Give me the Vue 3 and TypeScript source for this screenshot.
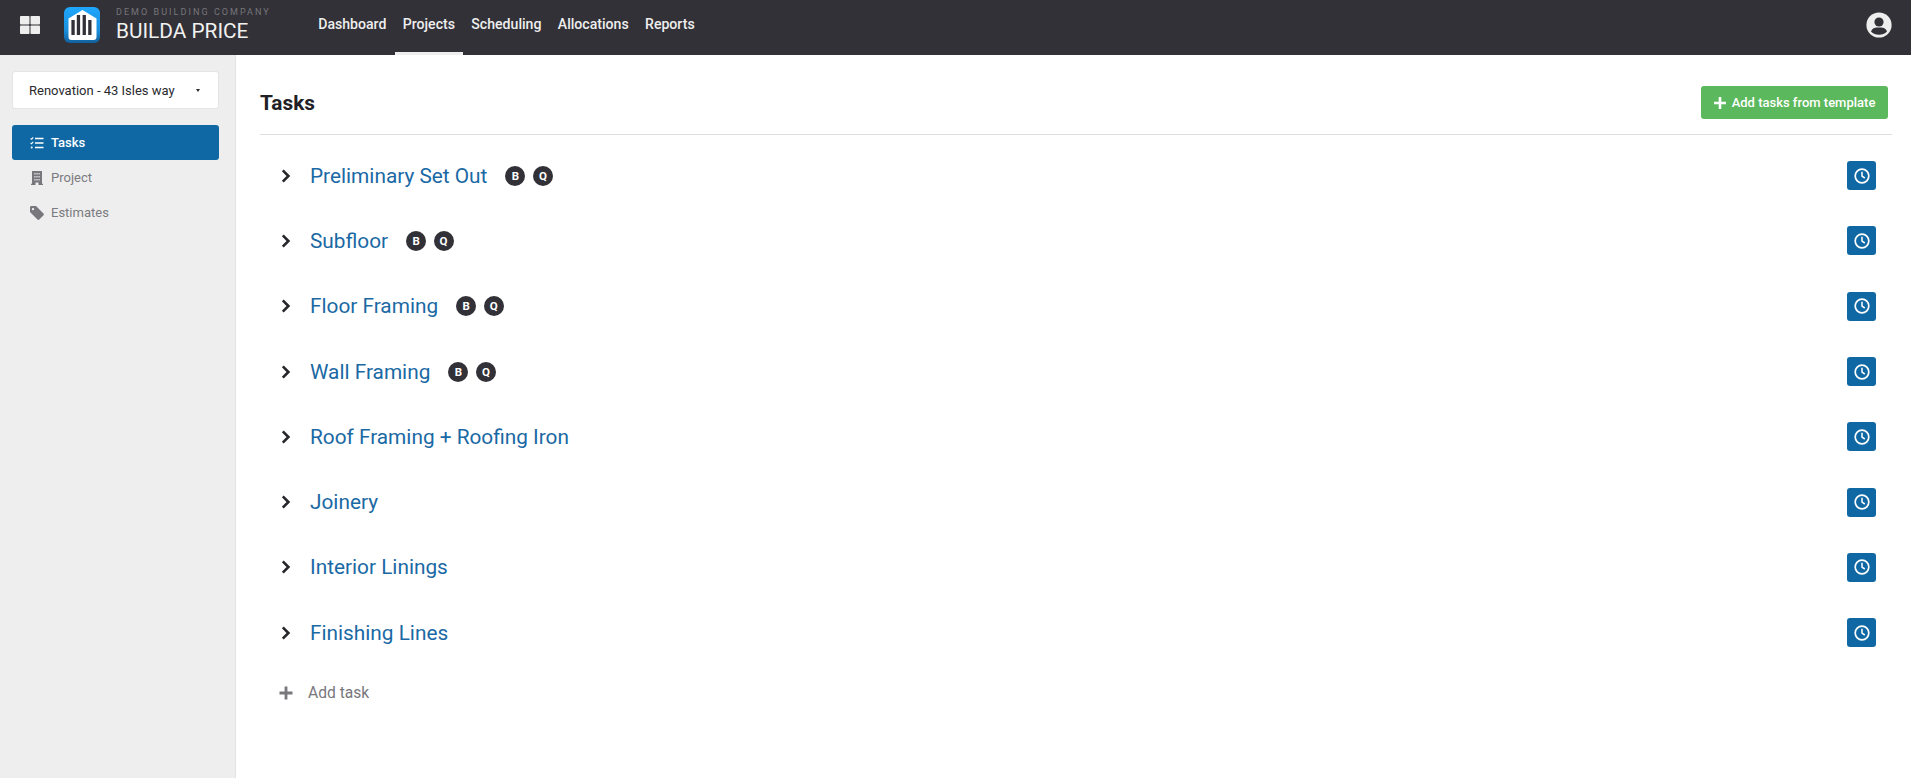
<script setup lang="ts">
interface Task { name: string; badges: boolean }
const tasks: Task[] = [
  { name: 'Preliminary Set Out', badges: true },
  { name: 'Subfloor', badges: true },
  { name: 'Floor Framing', badges: true },
  { name: 'Wall Framing', badges: true },
  { name: 'Roof Framing + Roofing Iron', badges: false },
  { name: 'Joinery', badges: false },
  { name: 'Interior Linings', badges: false },
  { name: 'Finishing Lines', badges: false },
]
const nav = ['Dashboard', 'Projects', 'Scheduling', 'Allocations', 'Reports']
</script>

<template>
  <div class="app">
    <header class="topbar">
      <svg class="grid-icon" width="20" height="18" viewBox="0 0 20 18">
        <rect x="0" y="0" width="9.5" height="8.5" rx="0.8" fill="#eeeeee" />
        <rect x="10.5" y="0" width="9.5" height="8.5" rx="0.8" fill="#eeeeee" />
        <rect x="0" y="9.5" width="9.5" height="8.5" rx="0.8" fill="#eeeeee" />
        <rect x="10.5" y="9.5" width="9.5" height="8.5" rx="0.8" fill="#eeeeee" />
      </svg>
      <svg class="logo" width="36" height="36" viewBox="0 0 36 36">
        <defs>
          <linearGradient id="lg" x1="0" y1="0" x2="0" y2="1">
            <stop offset="0" stop-color="#1ea7fd" />
            <stop offset="0.65" stop-color="#1a8fdc" />
            <stop offset="1" stop-color="#11609c" />
          </linearGradient>
        </defs>
        <rect width="36" height="36" rx="6" fill="url(#lg)" />
        <path d="M18.5 3 L32.5 11.5 V30 Q32.5 33 29.5 33 H7.5 Q4.5 33 4.5 30 V11.5 Z" fill="#ffffff" />
        <rect x="7.4" y="13" width="3.3" height="15" fill="#323137" />
        <rect x="12.8" y="8" width="3.3" height="20" fill="#323137" />
        <rect x="18.6" y="8" width="3.3" height="20" fill="#323137" />
        <rect x="24.2" y="13" width="3.3" height="15" fill="#323137" />
      </svg>
      <div class="brand">
        <div class="company">DEMO BUILDING COMPANY</div>
        <div class="product">BUILDA PRICE</div>
      </div>
      <nav class="nav">
        <a v-for="n in nav" :key="n" class="nav-item" :class="{ active: n === 'Projects' }">{{ n }}</a>
      </nav>
      <svg class="user" width="26" height="26" viewBox="0 0 26 26">
        <circle cx="13" cy="13" r="12.6" fill="#eeeeee" />
        <circle cx="13" cy="10" r="4.6" fill="#323137" />
        <path d="M5 19.5 C6.5 15.8 9.5 15.6 13 15.6 C16.5 15.6 19.5 15.8 21 19.5 C19 21.8 16 22.8 13 22.8 C10 22.8 7 21.8 5 19.5 Z" fill="#323137" />
      </svg>
    </header>

    <div class="body">
      <aside class="sidebar">
        <div class="select">
          <span>Renovation - 43 Isles way</span>
          <i class="caret"></i>
        </div>
        <div class="menu">
          <div class="menu-item active">
            <svg width="14" height="14" viewBox="0 0 14 14" fill="none" stroke="#fff">
              <path d="M5 2.5H13.5M5 7H13.5M5 11.5H13.5" stroke-width="1.5" />
              <path d="M0.6 2.3L1.6 3.3L3.2 1.3" stroke-width="1.1" />
              <path d="M0.6 6.8L1.6 7.8L3.2 5.8" stroke-width="1.1" />
              <circle cx="1.7" cy="11.5" r="1" fill="#fff" stroke="none" />
            </svg>
            <span>Tasks</span>
          </div>
          <div class="menu-item">
            <svg width="14" height="14" viewBox="0 0 14 14">
              <path d="M2 0H12V12.8H13V14H8.5V11.5H5.5V14H1V12.8H2Z" fill="#77777c" />
              <path d="M4.2 2H5.6V3.6H4.2ZM6.3 2H7.7V3.6H6.3ZM8.4 2H9.8V3.6H8.4ZM4.2 5H5.6V6.6H4.2ZM6.3 5H7.7V6.6H6.3ZM8.4 5H9.8V6.6H8.4ZM4.2 8H5.6V9.6H4.2ZM6.3 8H7.7V9.6H6.3ZM8.4 8H9.8V9.6H8.4Z" fill="#d8d8da" />
            </svg>
            <span>Project</span>
          </div>
          <div class="menu-item">
            <svg width="14" height="14" viewBox="0 0 14 14">
              <path fill-rule="evenodd" d="M0 1.4C0 .6.6 0 1.4 0H6L13.5 7.5C14 8 14 8.8 13.5 9.3L9.3 13.5C8.8 14 8 14 7.5 13.5L0 6ZM3 1.9A1.2 1.2 0 1 0 3 4.3A1.2 1.2 0 1 0 3 1.9Z" fill="#77777c" />
            </svg>
            <span>Estimates</span>
          </div>
        </div>
      </aside>

      <main class="content">
        <div class="title-row">
          <h1>Tasks</h1>
          <button class="add-btn">
            <svg width="12" height="12" viewBox="0 0 12 12"><path d="M6 0V12M0 6H12" stroke="#fff" stroke-width="2.6" /></svg>
            <span>Add tasks from template</span>
          </button>
        </div>

        <div class="rows">
          <div v-for="t in tasks" :key="t.name" class="row">
            <svg class="chev" width="10" height="14" viewBox="0 0 10 14" fill="none">
              <path d="M1.8 1.4L7.4 7L1.8 12.6" stroke="#26262b" stroke-width="2.6" />
            </svg>
            <a class="name">{{ t.name }}</a>
            <span v-if="t.badges" class="badges">
              <b class="badge">B</b>
              <b class="badge">Q</b>
            </span>
            <button class="clock">
              <svg width="16" height="16" viewBox="0 0 16 16" fill="none" stroke="#fff">
                <circle cx="8" cy="8" r="6.8" stroke-width="1.7" />
                <path d="M8 3.8V8.2L10.8 10" stroke-width="1.5" />
              </svg>
            </button>
          </div>
        </div>

        <div class="add-task">
          <svg width="14" height="14" viewBox="0 0 14 14"><path d="M7 .5V13.5M.5 7H13.5" stroke="#77777c" stroke-width="2.8" /></svg>
          <span>Add task</span>
        </div>
      </main>
    </div>
  </div>
</template>

<style>
html, body { margin: 0; background: #fff; }
</style>

<style scoped>
.app {
  height: 778px;
  display: flex;
  flex-direction: column;
  overflow: hidden;
  font-family: Roboto, "Liberation Sans", sans-serif;
}
.topbar {
  height: 55px;
  flex: none;
  background: #323137;
  display: flex;
  align-items: center;
  padding-left: 20px;
  padding-right: 19px;
}
.grid-icon { flex: none; margin-bottom: 5px; }
.logo { flex: none; margin-left: 24px; margin-bottom: 5px; }
.brand { margin-left: 16px; width: 194px; flex: none; margin-bottom: 6px; }
.company {
  font-size: 9px;
  line-height: 11px;
  letter-spacing: 2.05px;
  color: #76757a;
  white-space: nowrap;
}
.product {
  font-size: 20.8px;
  line-height: 24px;
  color: #f1f1f1;
  white-space: nowrap;
  margin-top: 1px;
}
.nav {
  display: flex;
  height: 55px;
}
.nav-item {
  padding: 0 8.2px;
  font-size: 14.1px;
  font-weight: 500;
  line-height: 48px;
  color: #eeeeee;
  height: 52px;
  border-bottom: 3px solid transparent;
  white-space: nowrap;
}
.nav-item.active { border-bottom-color: #eeeeee; }
.user { margin-left: auto; flex: none; margin-bottom: 6px; }

.body { flex: 1; display: flex; min-height: 0; }
.sidebar {
  width: 236px;
  flex: none;
  box-sizing: border-box;
  background: #eeeeee;
  border-right: 1px solid #e2e2e6;
  padding: 16px 16px 16px 12px;
}
.select {
  height: 36px;
  box-sizing: content-box;
  background: #fff;
  border: 1px solid #e3e3e8;
  border-radius: 3px;
  display: flex;
  align-items: center;
  justify-content: space-between;
  padding: 0 18px 0 16px;
  width: 171px;
  font-size: 13px;
  color: #2a2a2e;
}
.caret {
  width: 0;
  height: 0;
  border-left: 2.5px solid transparent;
  border-right: 2.5px solid transparent;
  border-top: 3px solid #2a2a2e;
}
.menu { margin-top: 16px; display: flex; flex-direction: column; }
.menu-item {
  height: 35px;
  display: flex;
  align-items: center;
  gap: 7px;
  padding-left: 18px;
  font-size: 13px;
  color: #7b7b80;
}
.menu-item.active {
  background: #0f68a3;
  color: #fff;
  font-weight: 500;
  border-radius: 3px;
}
.content { flex: 1; min-width: 0; padding: 0 19px 0 24px; }
.title-row {
  height: 80px;
  box-sizing: border-box;
  padding-top: 16px;
  border-bottom: 1px solid #dedee3;
  display: flex;
  align-items: center;
  justify-content: space-between;
}
h1 {
  margin: 0;
  font-size: 20.8px;
  font-weight: 700;
  color: #212125;
}
.add-btn {
  width: 187px;
  height: 33px;
  margin-right: 4px;
  border: none;
  border-radius: 3px;
  background: #5cb85c;
  color: #fff;
  font-family: inherit;
  font-size: 13px;
  font-weight: 500;
  display: flex;
  align-items: center;
  justify-content: center;
  gap: 6px;
  padding: 0;
}
.rows { padding-top: 8px; }
.row {
  height: 65.3px;
  display: flex;
  align-items: center;
  padding-left: 21px;
  padding-right: 16px;
}
.chev { flex: none; }
.name {
  margin-left: 19px;
  font-size: 20.8px;
  color: #1a69a4;
  white-space: nowrap;
}
.badges { display: inline-flex; gap: 7.5px; margin-left: 18px; }
.badge {
  width: 20px;
  height: 20px;
  border-radius: 50%;
  background: #323137;
  color: #fff;
  font-size: 11.5px;
  font-weight: 700;
  display: flex;
  align-items: center;
  justify-content: center;
}
.clock {
  margin-left: auto;
  width: 29px;
  height: 29px;
  padding: 0;
  border: none;
  border-radius: 3px;
  background: #0f68a3;
  display: flex;
  align-items: center;
  justify-content: center;
}
.add-task {
  display: flex;
  align-items: center;
  height: 26px;
  margin-top: 15px;
  padding-left: 19px;
  gap: 15px;
  font-size: 15.6px;
  color: #77777c;
}
</style>
